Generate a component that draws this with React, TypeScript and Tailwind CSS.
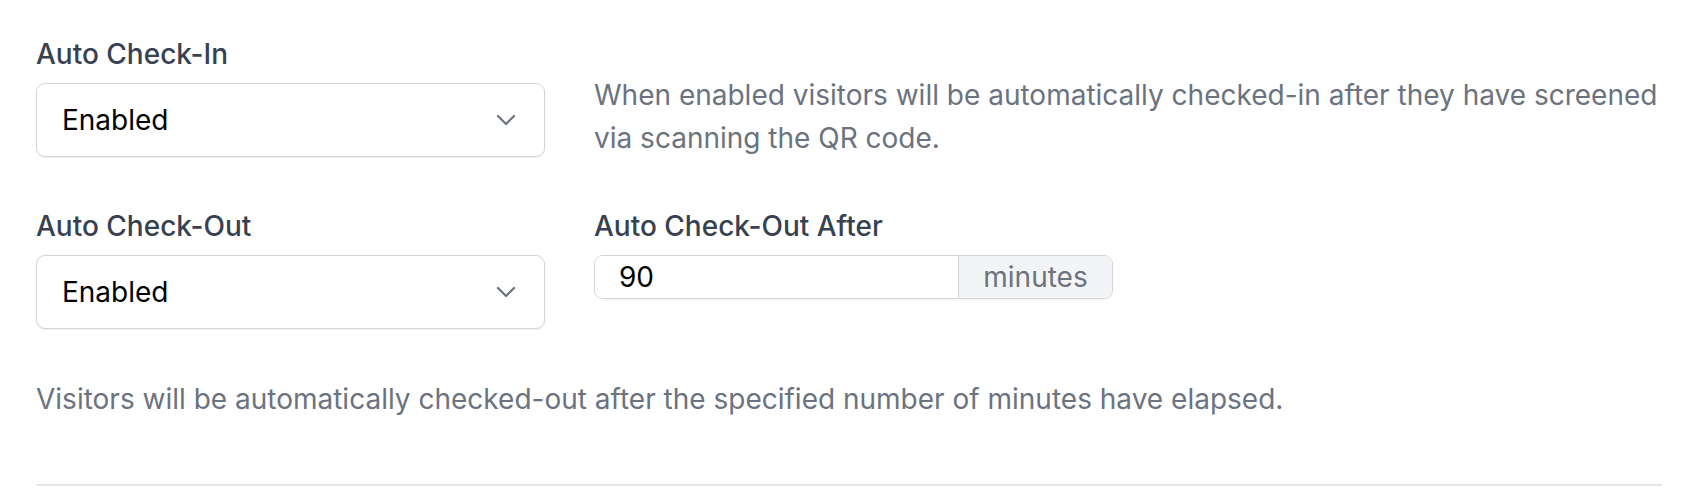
import React from "react";

function Chevron() {
  return (
    <svg width="20" height="12" viewBox="0 0 20 12" fill="none" className="shrink-0">
      <path d="M2 2l8 8 8-8" stroke="#6b7280" strokeWidth="2.2" strokeLinecap="round" strokeLinejoin="round" />
    </svg>
  );
}

function Select() {
  return (
    <div className="mt-[11px] flex h-[74px] w-full items-center justify-between rounded-[9px] border border-[#d1d5db] bg-white pl-[25px] pr-[28px] shadow-[0_1px_2px_rgba(0,0,0,0.06)]">
      <span className="text-[28px] leading-[40px] text-black">Enabled</span>
      <Chevron />
    </div>
  );
}

export default function App() {
  return (
    <div className="min-h-[488px] bg-white pl-[36px] pr-[40px] pt-[37px] font-['Inter','Noto_Sans',sans-serif] antialiased">
      <div className="grid grid-cols-[509px_1fr] gap-x-[49px]">
        <div>
          <label className="block text-[28px] font-medium leading-[35px] text-[#374151]">Auto Check-In</label>
          <Select />
        </div>
        <p className="pt-[37px] text-[28px] leading-[43px] text-[#6b7280]">
          When enabled visitors will be automatically checked-in after they have screened via scanning the QR code.
        </p>
      </div>

      <div className="mt-[49px] grid grid-cols-[509px_1fr] gap-x-[49px]">
        <div>
          <label className="block text-[28px] font-medium leading-[35px] text-[#374151]">Auto Check-Out</label>
          <Select />
        </div>
        <div>
          <label className="block text-[28px] font-medium leading-[35px] text-[#374151]">Auto Check-Out After</label>
          <div className="mt-[11px] flex h-[44px] w-[519px] overflow-hidden rounded-[9px] border border-[#d1d5db] shadow-[0_1px_2px_rgba(0,0,0,0.06)]">
            <div className="flex flex-1 items-center bg-white pl-[24px] text-[28px] text-black">90</div>
            <div className="flex w-[154px] items-center justify-center border-l border-[#d1d5db] bg-[#f3f4f6] text-[28px] text-[#6b7280]">
              minutes
            </div>
          </div>
        </div>
      </div>

      <p className="mt-[49px] text-[28px] leading-[43px] text-[#6b7280]">
        Visitors will be automatically checked-out after the specified number of minutes have elapsed.
      </p>

      <div className="mt-[63px] h-[2px] w-full bg-[#e5e7eb]" />
    </div>
  );
}
